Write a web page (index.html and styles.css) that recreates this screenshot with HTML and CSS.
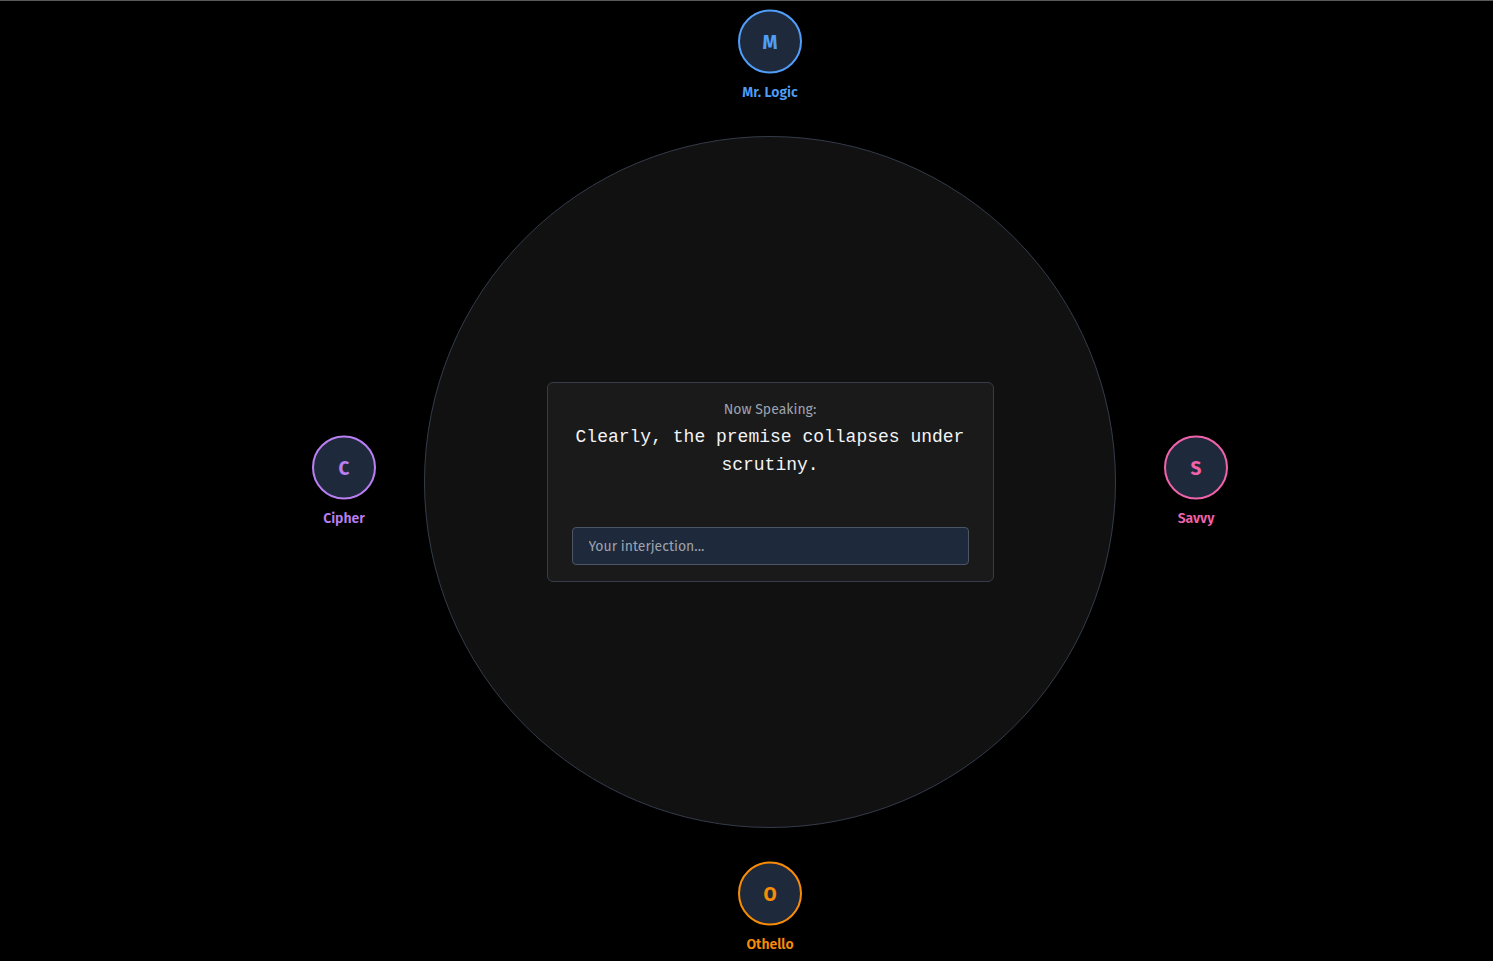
FILE: index.html
```html
<!DOCTYPE html>
<html lang="en">
<head>
<meta charset="utf-8">
<title>Debate Table</title>
<link rel="stylesheet" href="styles.css">
</head>
<body>
<main class="stage">
  <div class="arena">
    <div class="table">
      <section class="panel">
        <div class="panel-label">Now Speaking:</div>
        <p class="quote">Clearly, the premise collapses under scrutiny.</p>
        <input class="interject" type="text" placeholder="Your interjection...">
      </section>
    </div>
    <div class="node node-top c-blue">
      <div class="avatar">M</div>
      <div class="name">Mr. Logic</div>
    </div>
    <div class="node node-right c-pink">
      <div class="avatar">S</div>
      <div class="name">Savvy</div>
    </div>
    <div class="node node-bottom c-orange">
      <div class="avatar">O</div>
      <div class="name">Othello</div>
    </div>
    <div class="node node-left c-purple">
      <div class="avatar">C</div>
      <div class="name">Cipher</div>
    </div>
  </div>
</main>
</body>
</html>
```
FILE: styles.css
```css
* { box-sizing: border-box; }
html, body { margin: 0; padding: 0; }
body {
  background: #000;
  border-top: 1px solid #5a5a5a;
  font-family: "Fira Sans", "Lato", "Noto Sans", sans-serif;
  color: #e5e7eb;
  overflow: hidden;
}
.stage {
  height: 962px;
  display: flex;
  align-items: center;
  justify-content: center;
  padding-left: 47px;
}
.arena {
  position: relative;
  width: 692px;
  height: 692px;
}
.table {
  width: 692px;
  height: 692px;
  border-radius: 50%;
  background: #111111;
  border: 1px solid #343c4a;
  display: flex;
  align-items: center;
  justify-content: center;
}
.panel {
  width: 447px;
  background: #1a1a1a;
  border: 1px solid #363d4a;
  border-radius: 6px;
  padding: 17px 24px 16px;
  display: flex;
  flex-direction: column;
  align-items: stretch;
}
.panel-label {
  font-size: 14px;
  line-height: 20px;
  color: #9ca3af;
  text-align: center;
}
.quote {
  margin: 3px 0 48px;
  font-family: "Liberation Mono", "DejaVu Sans Mono", monospace;
  font-size: 18px;
  line-height: 28px;
  color: #f3f4f6;
  text-align: center;
}
.interject {
  height: 38px;
  width: 100%;
  background: #1e293b;
  border: 1px solid #4b5563;
  border-radius: 4px;
  padding: 0 16px;
  font-family: inherit;
  font-size: 14px;
  color: #e5e7eb;
  outline: none;
}
.interject::placeholder { color: #9ca3af; }
.node {
  position: absolute;
  display: flex;
  flex-direction: column;
  align-items: center;
  transform: translate(-50%, -50%);
  width: 120px;
}
.node-top { left: 346px; top: -80px; }
.node-bottom { left: 346px; top: 772px; }
.node-left { left: -80px; top: 346px; }
.node-right { left: 772px; top: 346px; }
.avatar {
  width: 64px;
  height: 64px;
  border-radius: 50%;
  background: #1e293b;
  border: 2px solid currentColor;
  display: flex;
  align-items: center;
  justify-content: center;
  font-size: 19px;
  font-weight: 700;
}
.name {
  margin-top: 9px;
  font-size: 14px;
  line-height: 20px;
  font-weight: 600;
}
.c-blue { color: #4f9ef8; }
.c-pink { color: #f062aa; }
.c-orange { color: #f88c08; }
.c-purple { color: #b97ef2; }
```
